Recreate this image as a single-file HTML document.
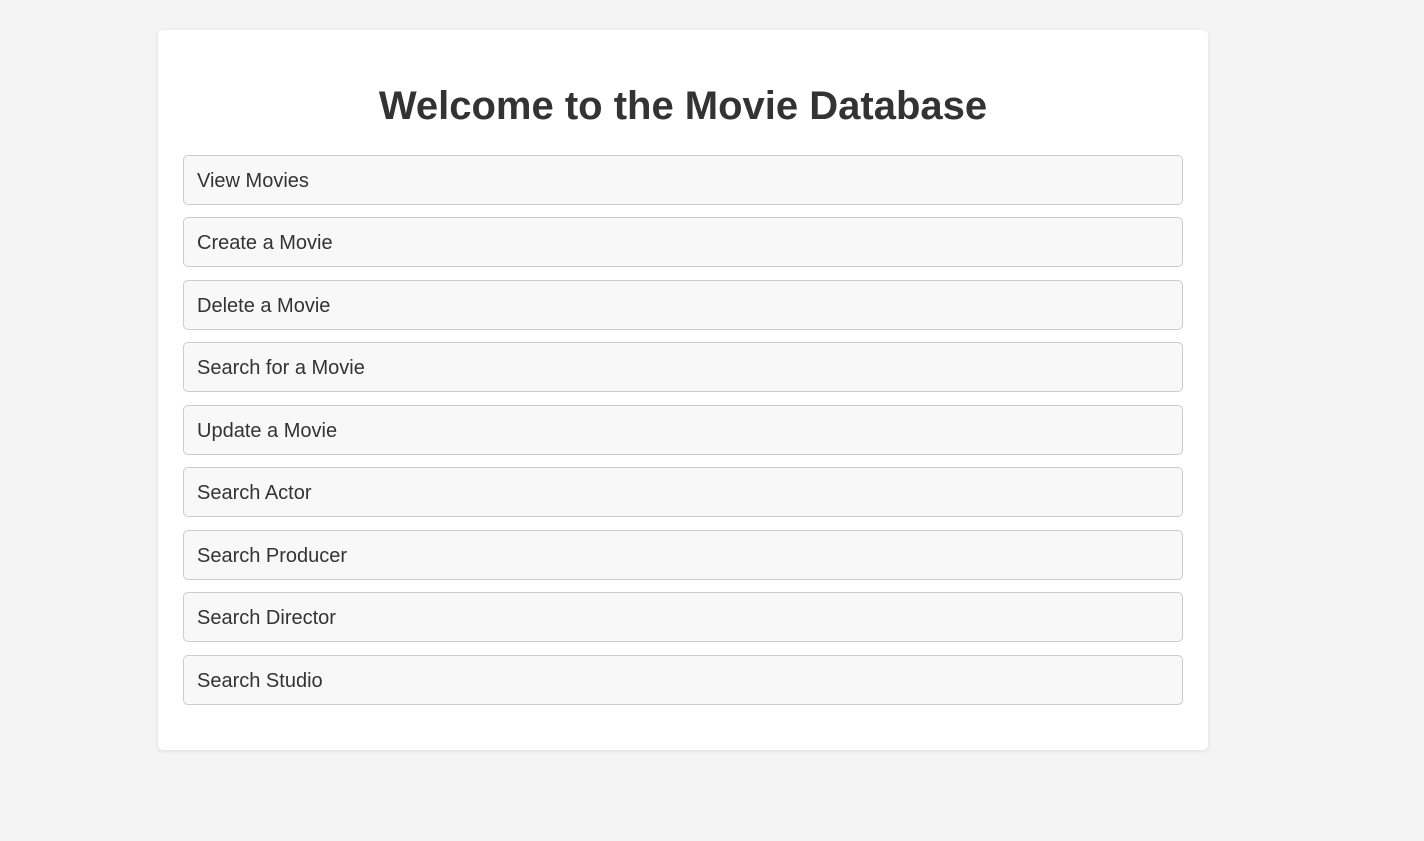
<!DOCTYPE html>
<html><head><style>
body{margin:0;background:#f4f4f4;font-family:"Liberation Sans",Arial,sans-serif;}
.card{position:absolute;left:158px;top:30px;width:1050px;height:720px;background:#fff;border-radius:5px;box-shadow:0 1px 4px rgba(0,0,0,0.1);}
h1{position:absolute;top:80px;left:0;width:100%;margin:0;text-align:center;font-size:40px;line-height:50px;color:#333;font-weight:bold;}
.item{position:absolute;left:25px;height:47px;padding-top:1px;border:1px solid #ccc;border-radius:5px;background:#f8f8f8;box-sizing:content-box;font-size:20px;line-height:48px;color:#333;padding-left:13px;width:985px;}
</style></head><body>
<div class="card">
<h1 style="top:51px">Welcome to the Movie Database</h1>
<div class="item" style="top:125px">View Movies</div>
<div class="item" style="top:187px">Create a Movie</div>
<div class="item" style="top:250px">Delete a Movie</div>
<div class="item" style="top:312px">Search for a Movie</div>
<div class="item" style="top:375px">Update a Movie</div>
<div class="item" style="top:437px">Search Actor</div>
<div class="item" style="top:500px">Search Producer</div>
<div class="item" style="top:562px">Search Director</div>
<div class="item" style="top:625px">Search Studio</div>
</div>
</body></html>
